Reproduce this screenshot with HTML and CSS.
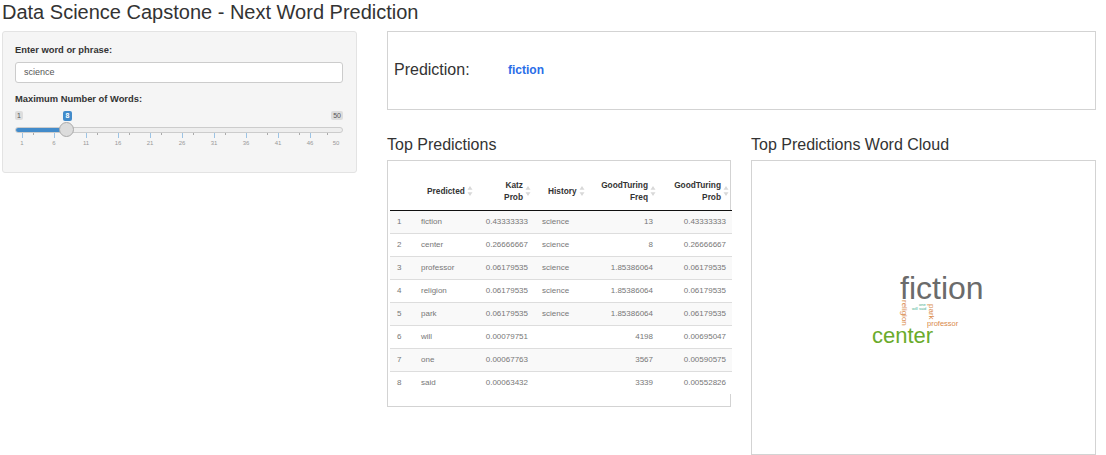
FILE: index.html
```html
<!DOCTYPE html>
<html lang="en">
<head>
    <meta charset="UTF-8" />
    <title>Data Science Capstone - Next Word Prediction</title>
    <link rel="stylesheet" href="styles.css">
</head>
<body>
<h2 class="title">Data Science Capstone - Next Word Prediction</h2>
<div class="page">
    <div class="sidebar">
        <label class="field-label" for="phrase">Enter word or phrase:</label>
        <input class="text-input" type="text" id="phrase" value="science" />
        <div class="field-label slider-label">Maximum Number of Words:</div>
        <div class="slider">
            <span class="badge badge-min">1</span>
            <span class="badge badge-val">8</span>
            <span class="badge badge-max">50</span>
            <div class="track"><div class="track-fill"></div></div>
            <div class="thumb"></div>
            <div class="ticks">
                <span class="tick major"></span><span class="tick"></span>
                <span class="tick major"></span><span class="tick"></span>
                <span class="tick major"></span><span class="tick"></span>
                <span class="tick major"></span><span class="tick"></span>
                <span class="tick major"></span><span class="tick"></span>
                <span class="tick major"></span><span class="tick"></span>
                <span class="tick major"></span><span class="tick"></span>
                <span class="tick major late"></span><span class="tick late"></span>
                <span class="tick major late"></span><span class="tick late"></span>
                <span class="tick major end"></span><span class="tick"></span>
            </div>
            <div class="tick-labels">
                <span>1</span><span>6</span><span>11</span><span>16</span><span>21</span>
                <span>26</span><span>31</span><span>36</span><span>41</span><span>46</span><span>50</span>
            </div>
        </div>
    </div>

    <div class="main">
        <div class="box prediction">
            <span class="prediction-label">Prediction:</span>
            <span class="prediction-word">fiction</span>
        </div>
        <div class="columns">
            <div class="col">
                <h4 class="col-title">Top Predictions</h4>
                <div class="box table-box">
                    <table class="results">
                        <colgroup>
                            <col class="c-num"><col class="c-word"><col class="c-katz">
                            <col class="c-hist"><col class="c-freq"><col class="c-prob">
                        </colgroup>
                        <thead>
                            <tr>
                                <th></th>
                                <th class="left"><span class="th-in">Predicted<svg class="sort" viewBox="0 0 7 12"><path d="M3.5 0 6.5 4.5H.5z"/><path d="M3.5 12 6.5 7.5H.5z"/></svg></span></th>
                                <th><span class="th-in">Katz<br>Prob<svg class="sort" viewBox="0 0 7 12"><path d="M3.5 0 6.5 4.5H.5z"/><path d="M3.5 12 6.5 7.5H.5z"/></svg></span></th>
                                <th class="left"><span class="th-in">History<svg class="sort" viewBox="0 0 7 12"><path d="M3.5 0 6.5 4.5H.5z"/><path d="M3.5 12 6.5 7.5H.5z"/></svg></span></th>
                                <th><span class="th-in">GoodTuring<br>Freq<svg class="sort" viewBox="0 0 7 12"><path d="M3.5 0 6.5 4.5H.5z"/><path d="M3.5 12 6.5 7.5H.5z"/></svg></span></th>
                                <th><span class="th-in">GoodTuring<br>Prob<svg class="sort" viewBox="0 0 7 12"><path d="M3.5 0 6.5 4.5H.5z"/><path d="M3.5 12 6.5 7.5H.5z"/></svg></span></th>
                            </tr>
                        </thead>
                        <tbody>
                            <tr><td>1</td><td class="left">fiction</td><td>0.43333333</td><td class="left">science</td><td>13</td><td>0.43333333</td></tr>
                            <tr><td>2</td><td class="left">center</td><td>0.26666667</td><td class="left">science</td><td>8</td><td>0.26666667</td></tr>
                            <tr><td>3</td><td class="left">professor</td><td>0.06179535</td><td class="left">science</td><td>1.85386064</td><td>0.06179535</td></tr>
                            <tr><td>4</td><td class="left">religion</td><td>0.06179535</td><td class="left">science</td><td>1.85386064</td><td>0.06179535</td></tr>
                            <tr><td>5</td><td class="left">park</td><td>0.06179535</td><td class="left">science</td><td>1.85386064</td><td>0.06179535</td></tr>
                            <tr><td>6</td><td class="left">will</td><td>0.00079751</td><td class="left"></td><td>4198</td><td>0.00695047</td></tr>
                            <tr><td>7</td><td class="left">one</td><td>0.00067763</td><td class="left"></td><td>3567</td><td>0.00590575</td></tr>
                            <tr><td>8</td><td class="left">said</td><td>0.00063432</td><td class="left"></td><td>3339</td><td>0.00552826</td></tr>
                        </tbody>
                    </table>
                </div>
            </div>
            <div class="col">
                <h4 class="col-title">Top Predictions Word Cloud</h4>
                <div class="box cloud-box">
                    <span class="word w-fiction">fiction</span>
                    <span class="word w-center">center</span>
                    <span class="word w-professor">professor</span>
                    <span class="word w-religion">religion</span>
                    <span class="word w-park">park</span>
                    <span class="word w-one">one</span>
                    <span class="word w-will">will</span>
                    <span class="word w-said">said</span>
                </div>
            </div>
        </div>
    </div>
</div>
</body>
</html>
```

FILE: styles.css
```css
* {
    box-sizing: border-box;
}
body {
    margin: 0;
    font-family: "Liberation Sans", Arial, sans-serif;
    color: #333;
    background: #fff;
    overflow: hidden;
}
.title {
    margin: 0;
    padding: 1px 0 0 2px;
    height: 31px;
    font-size: 20px;
    line-height: 22px;
    font-weight: 400;
}
.page {
    display: flex;
    align-items: flex-start;
    padding: 0 10px 0 2px;
}

/* sidebar */
.sidebar {
    width: 355px;
    height: 142px;
    flex: none;
    padding: 12px 12px 0;
    background: #f5f5f5;
    border: 1px solid #e3e3e3;
    border-radius: 3px;
}
.field-label {
    display: block;
    font-size: 9.35px;
    line-height: 12px;
    font-weight: 700;
}
.text-input {
    display: block;
    width: 328px;
    height: 21px;
    margin-top: 6px;
    padding: 0 8px 2px;
    font-family: inherit;
    font-size: 9px;
    color: #555;
    background: #fff;
    border: 1px solid #ccc;
    border-radius: 3px;
}
.slider-label {
    margin-top: 10px;
}
.slider {
    position: relative;
    width: 328px;
    height: 50px;
    margin-top: 6px;
    padding-top: 16px;
}
.badge {
    position: absolute;
    top: 0;
    padding: 0 2px;
    font-size: 7px;
    line-height: 9px;
    color: #555;
    background: #ddd;
    border-radius: 2px;
}
.badge-min { left: 0; }
.badge-max { right: 0; }
.badge-val {
    left: 48px;
    height: 10px;
    padding: 0 2.5px;
    line-height: 10px;
    font-weight: 700;
    color: #fff;
    background: #428bca;
}
.track {
    height: 6px;
    background: #eee;
    border: 1px solid #ccc;
    border-radius: 3px;
    overflow: hidden;
}
.track-fill {
    width: 52px;
    height: 100%;
    margin: -1px 0 0 -1px;
    box-sizing: content-box;
    border: 1px solid #428bca;
    background: #428bca;
}
.thumb {
    position: absolute;
    top: 11px;
    left: 44px;
    width: 15px;
    height: 15px;
    background: #dcdcdc;
    border: 1px solid #aaa;
    border-radius: 50%;
}
.ticks {
    display: flex;
    height: 5px;
    padding-left: 7px;
}
.tick {
    flex: none;
    width: 21px;
    height: 2px;
    border-left: 1px solid #aaa;
}
.tick.late {
    width: 11px;
}
.tick.major {
    width: 11px;
    height: 5px;
    border-left-color: #9cc3e4;
}
.tick.major.late {
    width: 21px;
}
.tick.major.end {
    width: 17px;
}
.tick-labels {
    display: flex;
    margin-top: 1px;
}
.tick-labels span {
    flex: none;
    width: 14px;
    margin-right: 18px;
    text-align: center;
    font-size: 6px;
    line-height: 8px;
    color: #999;
}
.tick-labels span:nth-child(10) {
    margin-right: 12px;
}

/* main area */
.main {
    width: 709px;
    margin-left: 30px;
    flex: none;
}
.box {
    background: #fff;
    border: 1px solid #d3d3d3;
}
.prediction {
    display: flex;
    align-items: center;
    height: 79px;
    padding: 0 0 2px 6px;
}
.prediction-label {
    width: 114px;
    font-size: 16px;
}
.prediction-word {
    font-size: 12px;
    font-weight: 700;
    color: #2a6ee8;
}
.columns {
    display: flex;
    gap: 20px;
    margin-top: 25px;
}
.col {
    width: 345px;
    flex: none;
}
.col:first-child {
    width: 344px;
}
.col-title {
    margin: 0;
    padding-top: 1px;
    height: 25px;
    font-size: 16px;
    line-height: 18px;
    font-weight: 400;
}

/* table */
.table-box {
    height: 247px;
    padding: 1px 0 0 2px;
}
.results {
    width: 342px;
    table-layout: fixed;
    border-collapse: collapse;
    font-size: 8px;
    color: #777;
}
.c-num { width: 24px; }
.c-word { width: 56px; }
.c-katz { width: 64px; }
.c-hist { width: 53px; }
.c-freq { width: 72px; }
.c-prob { width: 73px; }
.results th {
    height: 48px;
    padding: 11px 3px 0 6px;
    text-align: right;
    font-size: 8.3px;
    line-height: 12px;
    font-weight: 700;
    color: #333;
    border-bottom: 1px solid #111;
}
.results th.left {
    text-align: left;
    padding-left: 13px;
}
.results th:nth-child(4) {
    padding-left: 14px;
}
.th-in {
    position: relative;
    display: inline-block;
    padding-right: 8px;
}
.sort {
    position: absolute;
    right: 0;
    top: 50%;
    width: 6px;
    height: 10px;
    margin-top: -5px;
    fill: #d8d8d8;
}
.results td {
    height: 23px;
    padding: 0 6px 0 7px;
    text-align: right;
    background: #fff;
    border-bottom: 1px solid #ddd;
}
.results td:first-child,
.results td.left {
    text-align: left;
}
.results td:nth-child(4) {
    padding-left: 8px;
}
.results tbody tr:nth-child(odd) td {
    background: #f9f9f9;
}
.results tbody tr:last-child td {
    background: #fff;
    border-bottom: 0;
}

/* word cloud, words placed on a free canvas */
.cloud-box {
    position: relative;
    height: 295px;
}
.word {
    position: absolute;
    white-space: nowrap;
    line-height: 1;
}
.w-fiction { left: 148px; top: 113px; font-size: 32px; line-height: 0.88; color: #6b6b6b; }
.w-center { left: 120px; top: 164px; font-size: 22px; color: #6aab2b; }
.w-professor { left: 175px; top: 159px; font-size: 7.5px; color: #d98a4a; }
.w-religion { left: 156px; top: 139px; font-size: 8px; color: #d98a4a; transform: rotate(90deg); transform-origin: 0 0; }
.w-park { left: 183px; top: 143px; font-size: 8px; color: #d98a4a; transform: rotate(90deg); transform-origin: 0 0; }
.w-one { left: 167px; top: 142px; font-size: 4px; color: #3fae8e; }
.w-will { left: 160px; top: 146px; font-size: 4px; color: #3fae8e; }
.w-said { left: 167px; top: 146px; font-size: 4px; color: #3fae8e; }
```
